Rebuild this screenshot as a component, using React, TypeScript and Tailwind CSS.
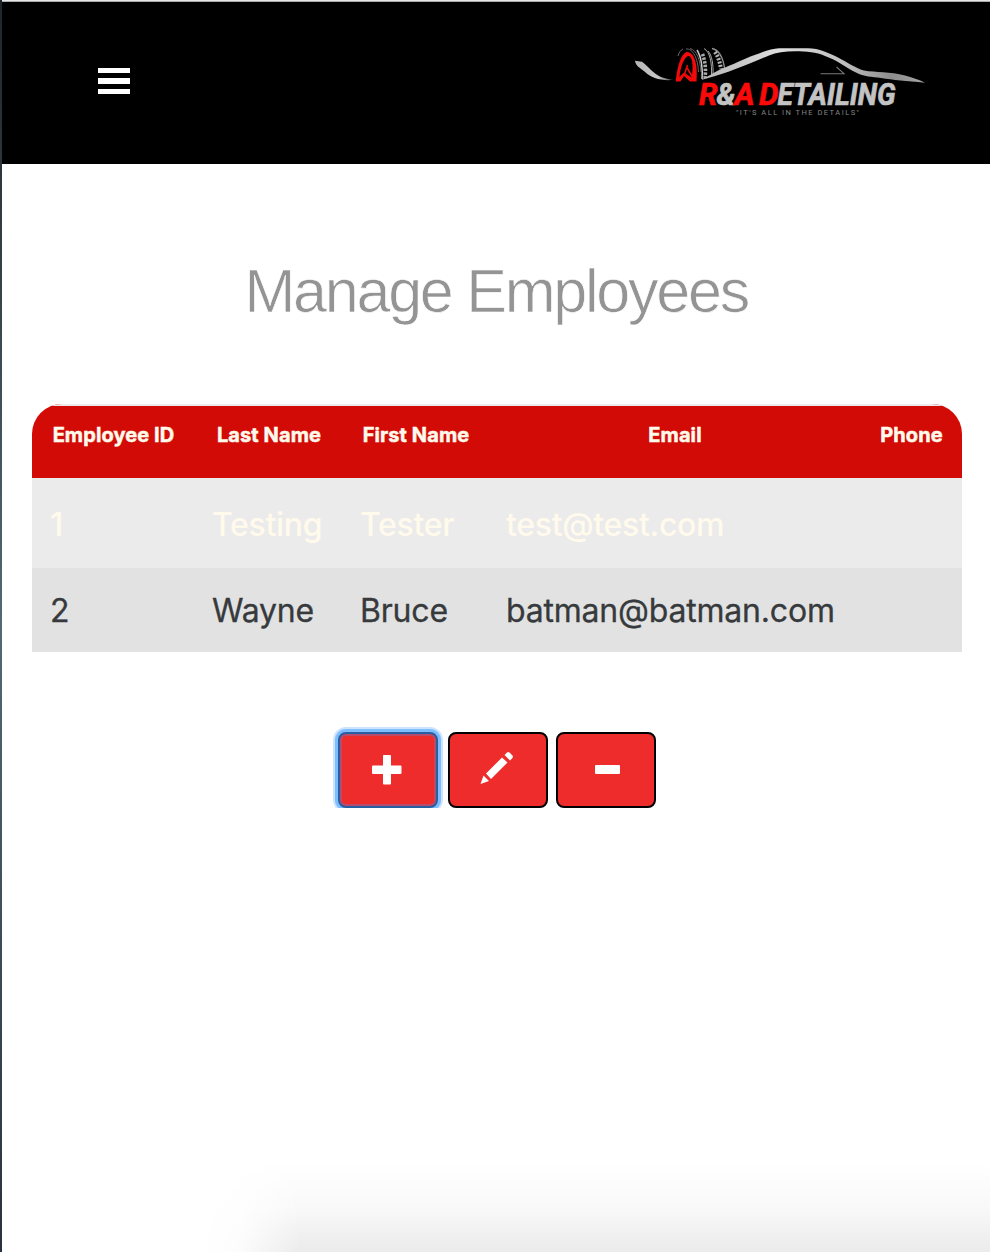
import React from "react";

const columns = ["Employee ID", "Last Name", "First Name", "Email", "Phone"];

function Logo() {
  return (
    <svg className="block h-[90px] w-[310px]" viewBox="625 35 310 90" role="img" aria-label="R&A Detailing">
      <defs>
        <linearGradient id="body" x1="0" x2="1" y1="0" y2="0">
          <stop offset="0" stopColor="#b5b5b5" />
          <stop offset="0.35" stopColor="#dedede" />
          <stop offset="0.65" stopColor="#bdbdbd" />
          <stop offset="0.85" stopColor="#8d8d8d" />
          <stop offset="1" stopColor="#a5a5a5" />
        </linearGradient>
        <linearGradient id="nose" x1="0" x2="1" y1="0" y2="0">
          <stop offset="0" stopColor="#b5b5b5" />
          <stop offset="0.6" stopColor="#c8c8c8" />
          <stop offset="1" stopColor="#4a4a4a" />
        </linearGradient>
      </defs>
      <path d="M635 60.700L642 61.700C648 66 653 73.500 661 77C665 78.500 669 79.500 673.500 79.800C663 81.500 651 78 644.500 71.500C640 67.500 635.500 66 635 60.700Z" fill="url(#nose)" />
      <path d="M675.800 81.500C677 68 681 53 687 52C695 52 698 66 696.500 81.500H690L684 76L680.500 81.500ZM679.500 77L684 72.500L691.500 77.500C694 65 692 55 688 56C684 57.500 680.500 67 679.500 77Z" fill="#f20909" fillRule="evenodd" />
      <path d="M684.500 74L687.500 65M686.500 67L692.500 77M683 74L693 80" stroke="#f20909" strokeWidth="1.500" fill="none" />
      <path d="M678 56C679 52 681 50 683 49M686 49C693 48 698 59 698.500 72M690 48.500C697 50 700 60 701 72" stroke="#686868" strokeWidth="1" fill="none" />
      <path d="M697 50C701.500 57 703 70 702 79" stroke="#c9c9c9" strokeWidth="1.500" fill="none" />
      <path d="M702.500 54C705.500 62 706 71 705 78" stroke="#a9a9a9" strokeWidth="3.600" strokeDasharray="2.400 1.300" fill="none" />
      <path d="M704 48.500C710 52 712 62 711.500 76M708 51C712 55 713.500 65 713 75" stroke="#aaa" strokeWidth="1" fill="none" />
      <path d="M712 48.500C719 50 723 58 724.500 68" stroke="#909090" strokeWidth="1.300" fill="none" />
      <path d="M715 52C718.500 57 720 63 721 69" stroke="#b5b5b5" strokeWidth="4" strokeDasharray="2 1.500" fill="none" />
      <path d="M702 79C710 76 717 70 725 67.500C738 62.500 747 57 759 53.500C766 50.500 773 48.500 779 48.200H808C819 48.200 829 53 838 57.500C848 62.500 855 68 864 70.500C876 72.500 890 71.500 905 75.500C912 77.500 919 79.500 925 82.700C906 81 893 80 881 78C872 76.500 864 77 856 72.500C845 67 837 60 825 56C816 52 807 51.500 795 51.300C785 51.300 776 52.500 769 55.500C750 63 732 72 702 79.700Z" fill="url(#body)" />
      <path d="M820.500 73.700H844L836.500 67" stroke="#797979" strokeWidth="1.100" fill="none" />
      <g fontFamily="Roboto, sans-serif" fontWeight="700" fontStyle="italic" fontSize="30.500" strokeWidth="0.700">
        <text x="699" y="105" fill="#fb0a0a" stroke="#fb0a0a" textLength="18.500" lengthAdjust="spacingAndGlyphs">R</text>
        <text x="716.500" y="105" fill="#c3c3c3" stroke="#c3c3c3" textLength="19" lengthAdjust="spacingAndGlyphs">&amp;</text>
        <text x="734.500" y="105" fill="#fb0a0a" stroke="#fb0a0a" textLength="20" lengthAdjust="spacingAndGlyphs">A</text>
        <text x="759" y="105" fill="#fb0a0a" stroke="#fb0a0a" textLength="19.500" lengthAdjust="spacingAndGlyphs">D</text>
        <text x="777.500" y="105" fill="#c3c3c3" stroke="#c3c3c3" textLength="118" lengthAdjust="spacingAndGlyphs">ETAILING</text>
      </g>
      <text x="736" y="115.200" fill="#858585" fontFamily="Roboto, sans-serif" fontSize="7.500" textLength="123">"IT'S ALL IN THE DETAILS"</text>
    </svg>
  );
}

const buttonClass =
  "flex h-[76px] w-[100px] items-center justify-center rounded-[8px] border-2 border-black bg-[#ee2c2c] pr-[2px] text-white";

export default function App() {
  return (
    <div className="relative flex h-[1252px] w-[990px] overflow-hidden bg-white">
      <div className="w-[2px] shrink-0 bg-gradient-to-b from-[#20252a] via-[#526975] to-[#29323d]" />
      <div className="flex min-w-0 flex-1 flex-col">
        <div className="h-[2px] shrink-0 border-t border-[#e6e6e6] bg-[#a9adad]" />
        <header className="flex h-[162px] shrink-0 items-center justify-between bg-black pr-[55px] pb-[6px] pl-[96px]">
          <button aria-label="Menu" className="flex flex-col gap-[5.500px] pt-[2px]">
            <span className="h-[5.300px] w-8 bg-white" />
            <span className="h-[5.300px] w-8 bg-white" />
            <span className="h-[5.300px] w-8 bg-white" />
          </button>
          <Logo />
        </header>

        <main className="flex flex-1 flex-col pt-[91px]">
          <h1 className="pl-[242.500px] font-['Liberation_Sans',sans-serif] text-[61px] leading-[72px] tracking-[-2.230px] text-[#949494] [-webkit-text-stroke:0.700px_white]">
            Manage Employees
          </h1>

          <table className="mt-[77px] ml-[30px] w-[930px] table-fixed border-separate border-spacing-0 overflow-hidden rounded-t-[30px] font-['Inter',sans-serif]">
            <colgroup>
              <col className="w-[163px]" />
              <col className="w-[148px]" />
              <col className="w-[146px]" />
              <col className="w-[372px]" />
              <col className="w-[101px]" />
            </colgroup>
            <thead>
              <tr className="h-[74px] bg-[#d20b06] text-[20px] font-extrabold text-[#fffaeb] [-webkit-text-stroke:0.500px_#fffaeb]">
                {columns.map((c) => (
                  <th key={c} className="border-t-2 border-[#ebebeb] pt-[15px] align-top leading-7 tracking-[0.100px] whitespace-nowrap">
                    {c}
                  </th>
                ))}
              </tr>
            </thead>
            <tbody className="text-[32px] leading-10">
              <tr className="h-[90px] bg-[#ebebeb] font-medium tracking-[-0.320px] text-[#fffaeb]">
                <td className="pt-1 pl-[18px]">1</td>
                <td className="pt-1 pl-[17px]">Testing</td>
                <td className="pt-1 pl-[17px]">Tester</td>
                <td className="pt-1 pl-[17px]">test@test.com</td>
                <td />
              </tr>
              <tr className="h-[84px] bg-[#e2e2e2] tracking-[-0.200px] text-[#373a3c] [-webkit-text-stroke:0.300px_#373a3c]">
                <td className="pt-[2px] pl-[18px]">2</td>
                <td className="pt-[2px] pl-[17px]">Wayne</td>
                <td className="pt-[2px] pl-[17px]">Bruce</td>
                <td className="pt-[2px] pl-[17px]">batman@batman.com</td>
                <td />
              </tr>
            </tbody>
          </table>

          <div className="ml-[331px] flex h-[156px] items-end overflow-hidden">
            <div className="flex pl-[5px]">
              <button aria-label="Add" className="mr-[10px] flex h-[76px] w-[100px] items-center justify-center rounded-[8px] border-2 border-[#2760a2] bg-[#ee2c2c] pr-[2px] text-white shadow-[inset_0_0_0_2px_#b94c6c,0_0_0_3px_#80bdff,0_0_0_5px_#cce5ff]">
                <svg className="size-8" viewBox="0 0 32 32" fill="currentColor">
                  <path d="M12.500 1h6.500q1 0 1 1v9.500h9.500q1 0 1 1V19q0 1-1 1H20v9.500q0 1-1 1h-6q-1 0-1-1V20H2q-1 0-1-1v-6.500q0-1 1-1h10V2q0-1 .5-1Z" />
                </svg>
              </button>
              <button aria-label="Edit" className={buttonClass + " mr-2 pb-[4px]"}>
                <svg className="size-9" viewBox="0 0 36 36" fill="currentColor">
                  <path d="M1.500 34L4.500 25.500L10 31ZM7 23.500L23 7.500L28.500 12.500L12 29ZM25.500 5L28 2.500Q29.500 1.500 31 3L33.500 5.500Q34.500 7 33 8.500L31 10.500Z" />
                </svg>
              </button>
              <button aria-label="Remove" className={buttonClass + " pb-px"}>
                <span className="ml-[4px] h-[9px] w-[25px] rounded-[1px] bg-white" />
              </button>
            </div>
          </div>
        </main>
      </div>
      <div className="pointer-events-none absolute right-0 bottom-0 h-[90px] w-[790px] bg-gradient-to-t from-[#ebebeb] via-[#f9f9f9] to-white [mask-image:linear-gradient(to_right,transparent,rgba(0,0,0,0.15)_40px,black_100px)]" />
    </div>
  );
}
